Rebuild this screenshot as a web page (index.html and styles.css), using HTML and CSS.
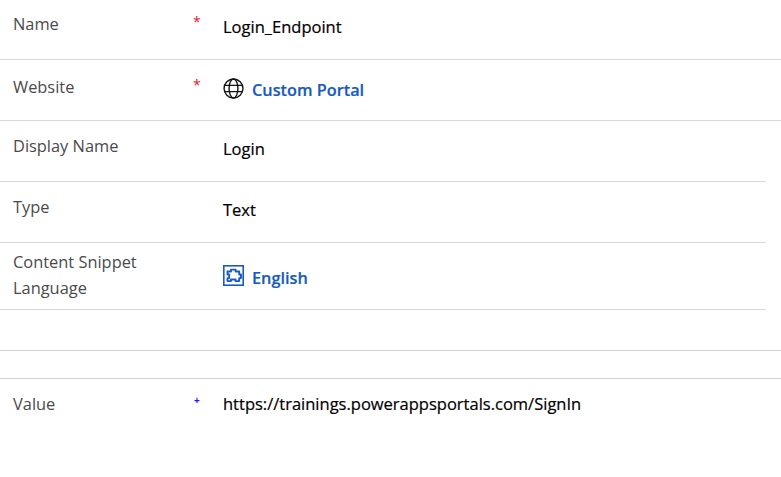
FILE: index.html
```html
<!DOCTYPE html>
<html lang="en">
<head>
<meta charset="utf-8">
<title>Content Snippet</title>
<link rel="stylesheet" href="styles.css">
</head>
<body>
<main class="form">
  <div class="row row-first full">
    <div class="label">Name</div>
    <div class="req red">*</div>
    <div class="value">Login_Endpoint</div>
  </div>
  <div class="row row-site full">
    <div class="label">Website</div>
    <div class="req red">*</div>
    <div class="value">
      <svg class="icon" viewBox="0 0 20 20" fill="none" stroke="#111" stroke-width="1.3">
        <circle cx="10" cy="10" r="9"/>
        <ellipse cx="10" cy="10" rx="4.2" ry="9"/>
        <path d="M1.6 7h16.8M1.6 13h16.8"/>
      </svg>
      <a class="link" href="#">Custom Portal</a>
    </div>
  </div>
  <div class="row">
    <div class="label">Display Name</div>
    <div class="req"></div>
    <div class="value">Login</div>
  </div>
  <div class="row">
    <div class="label">Type</div>
    <div class="req"></div>
    <div class="value">Text</div>
  </div>
  <div class="row row-tall">
    <div class="label label-wrap">Content Snippet Language</div>
    <div class="req"></div>
    <div class="value value-tall">
      <svg class="icon" viewBox="0 0 21 21" fill="none" stroke="#185abd">
        <rect x="0.8" y="0.8" width="19.4" height="19.4" stroke-width="1.6"/>
        <path d="M4.5 6.5H8V4.6h4.6v1.9h3.6v3H18v3.6h-1.8v3h-3.6v-1.6H8v1.6H4.5v-3h1.7V9.5H4.5z" stroke-width="1.9" stroke-linejoin="round"/>
      </svg>
      <a class="link link-lang" href="#">English</a>
    </div>
  </div>
  <div class="spacer spacer-a"></div>
  <div class="spacer spacer-b"></div>
  <div class="row row-value">
    <div class="label">Value</div>
    <div class="req blue">+</div>
    <div class="value">https://trainings.powerappsportals.com/SignIn</div>
  </div>
</main>
</body>
</html>
```
FILE: styles.css
```css
* { box-sizing: border-box; }
html, body { margin: 0; padding: 0; background: #fff; }
body {
  width: 781px;
  height: 477px;
  overflow: hidden;
  font-family: "Open Sans", "Noto Sans", sans-serif;
}
.form { display: flex; flex-direction: column; }
.row {
  display: grid;
  grid-template-columns: 180px 30px 1fr;
  width: 766px;
  height: 61px;
  padding-left: 13px;
  padding-top: 12px;
  border-bottom: 1px solid #d8d8d8;
}
.row-first { height: 60px; padding-top: 11px; }
.row-site { padding-top: 14px; }
.full { width: 781px; }
.row-tall { height: 67px; padding-top: 6px; }
.row-value { width: 781px; height: auto; border-bottom: 0; padding-top: 12px; }
.label {
  font-size: 16.4px;
  line-height: 26px;
  height: 26px;
  color: #4a4a4a;
}
.label-wrap { height: auto; width: 150px; }
.req { font-size: 14px; line-height: 22px; }
.red { color: #e8112d; }
.blue { color: #1a1aff; font-size: 10px; line-height: 18px; font-weight: 700; padding-left: 1px; }
.value {
  display: flex;
  align-items: center;
  height: 26px;
  font-size: 16.5px;
  font-weight: 500;
  color: #000;
  white-space: nowrap;
  padding-top: 5px;
  -webkit-text-stroke: 0.2px currentColor;
}
.row-value .value { padding-top: 0; margin-top: -1px; }
.row-site .value { padding-top: 6px; }
.value-tall { padding-top: 0; margin-top: 15px; }
.icon { width: 21px; height: 21px; margin: 0 8px 4px 0; flex: none; }
.link { color: #185abd; font-size: 16.3px; font-weight: 600; text-decoration: none; }
.link-lang { padding-top: 2px; }
.spacer { width: 781px; border-bottom: 1px solid #d0d0d0; }
.spacer-a { height: 41px; }
.spacer-b { height: 28px; }
```
